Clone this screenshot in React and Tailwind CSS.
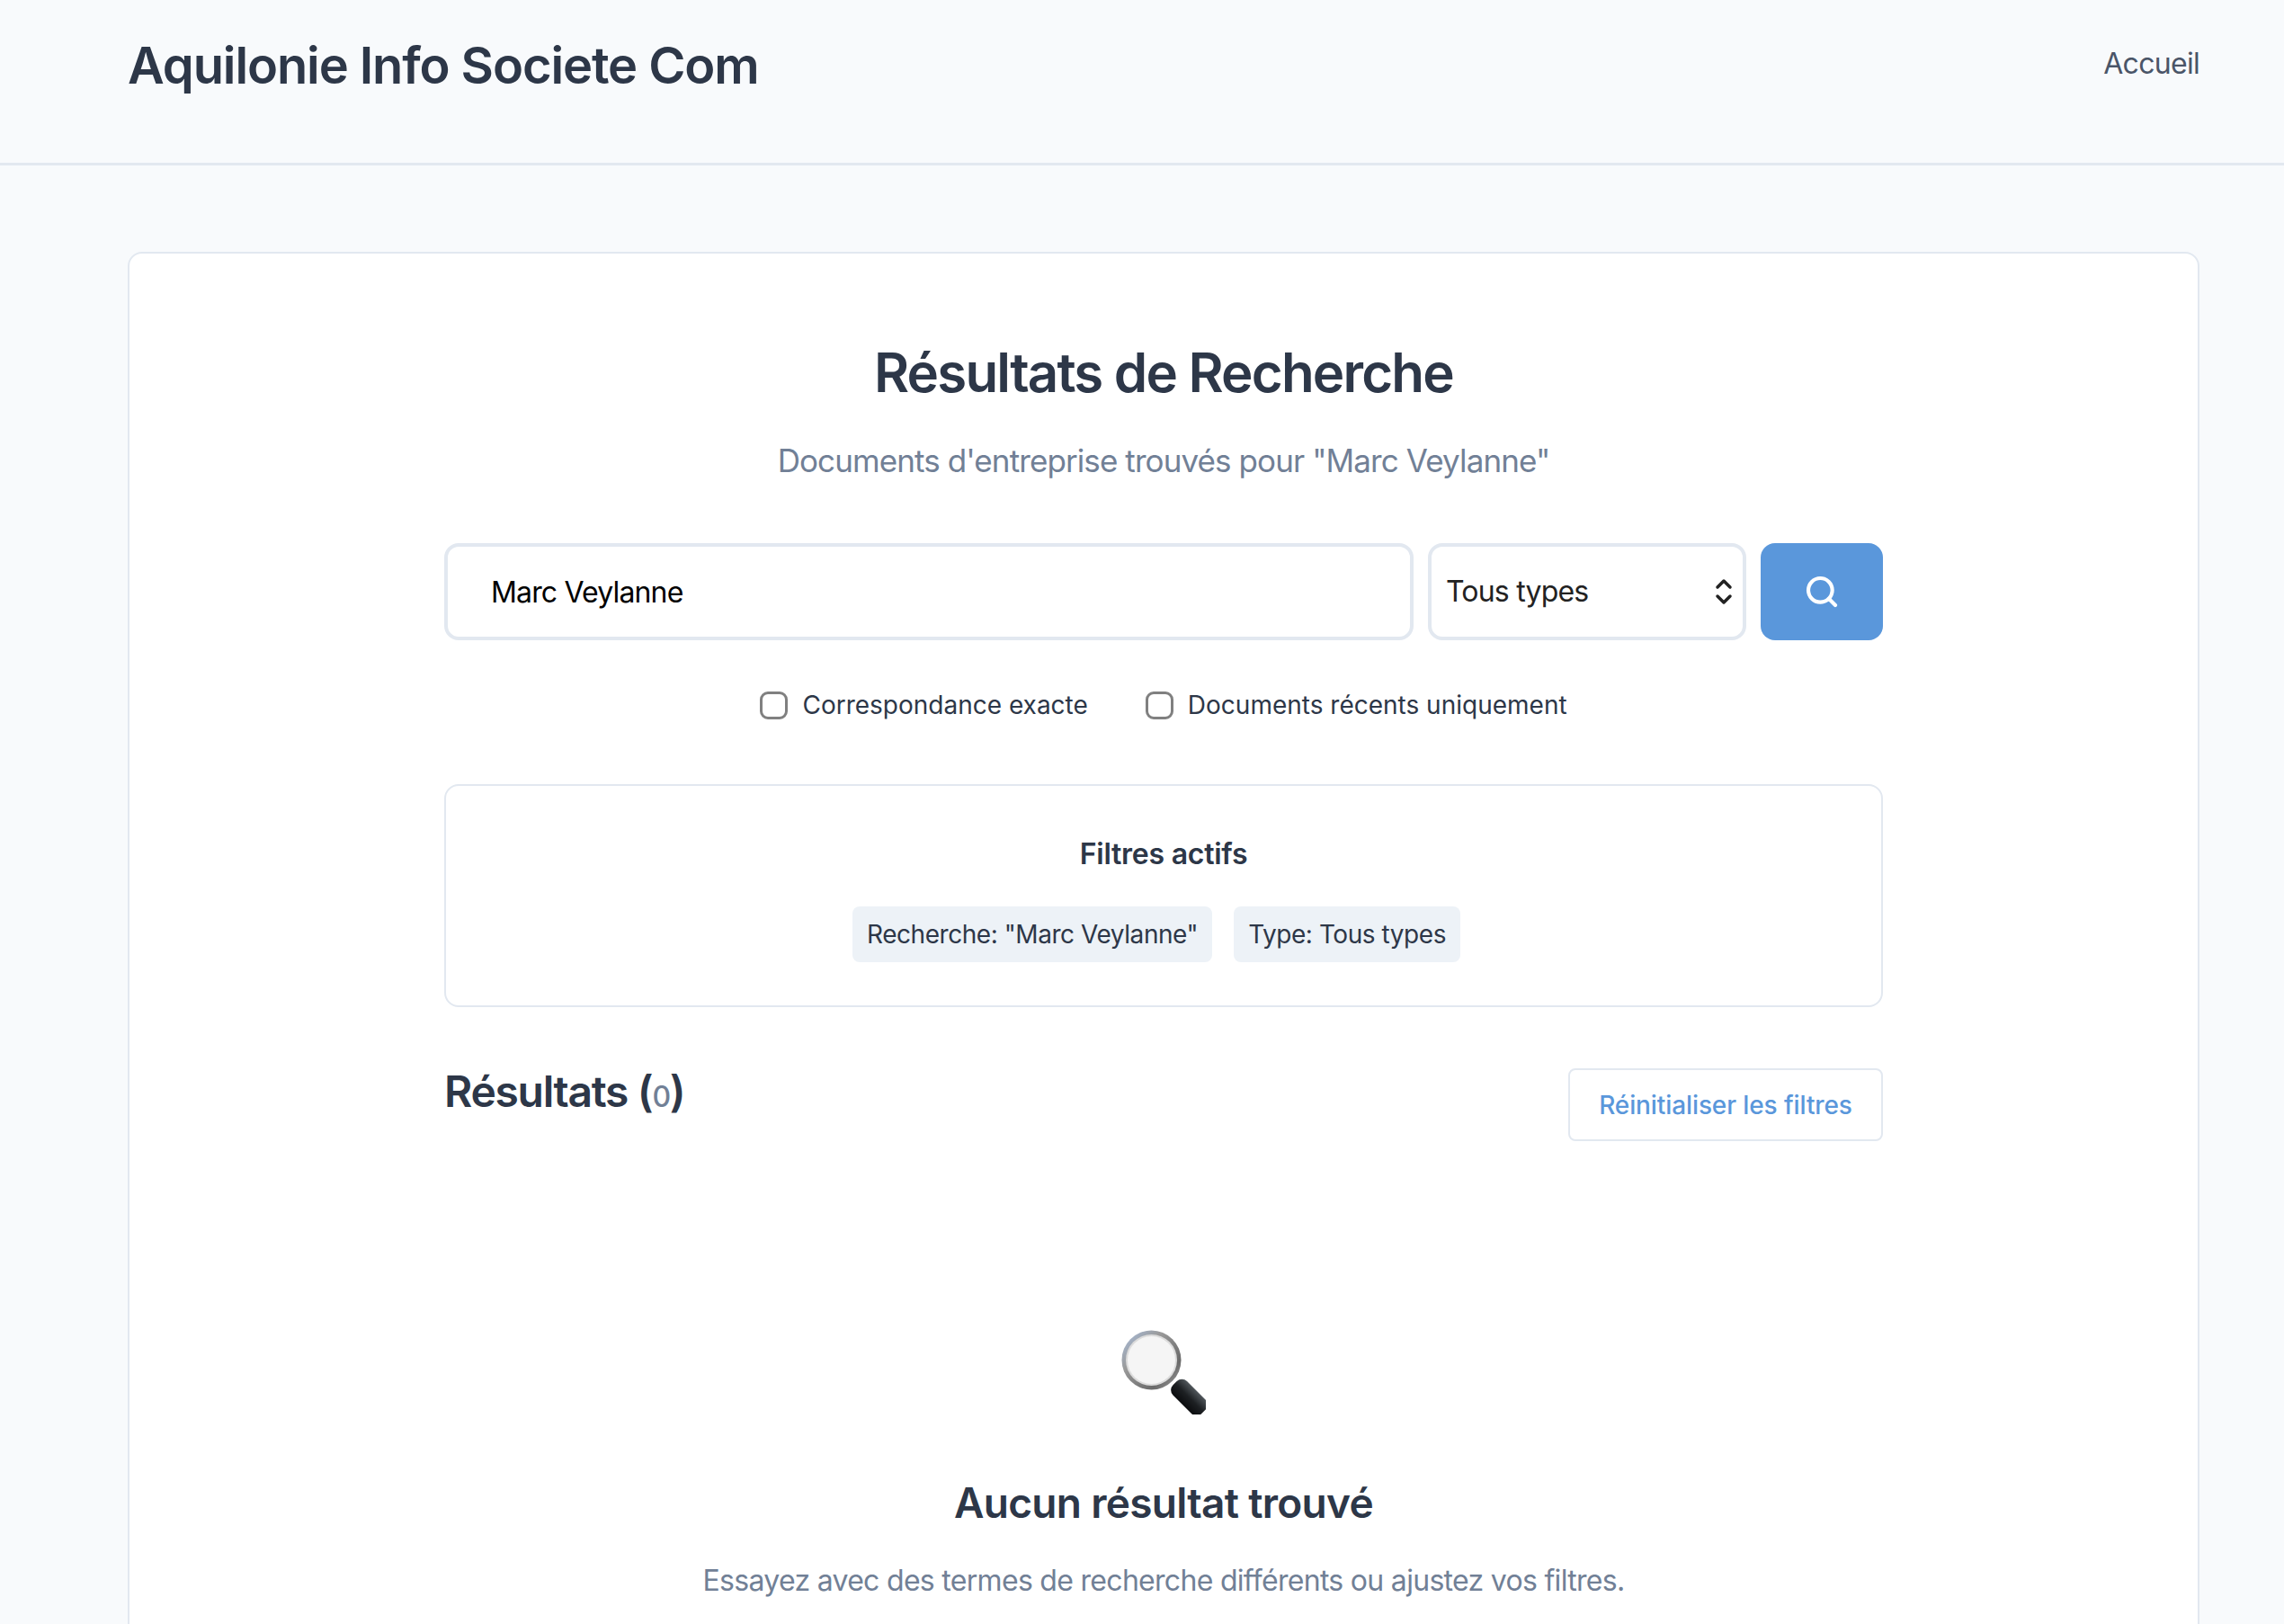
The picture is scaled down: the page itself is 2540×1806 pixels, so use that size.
import { Search } from 'lucide-react';

function Chip({ children }) {
  return (
    <span className="flex h-[62px] items-center rounded-lg bg-[#edf2f7] px-4 text-[28px] tracking-[-0.45px] text-[#2d3748]">
      {children}
    </span>
  );
}

function CheckOption({ label }) {
  return (
    <label className="flex items-center gap-4 text-[28px] text-[#2d3748]">
      <input type="checkbox" className="h-[31px] w-[31px] appearance-none rounded-[9px] border-[3px] border-[#808080] bg-white" />
      {label}
    </label>
  );
}

// emoji drawn by hand, no colour emoji font in the sandbox
function LensEmoji() {
  return (
    <svg className="h-[94px] w-[94px]" viewBox="0 0 94 94">
      <defs>
        <linearGradient id="ring" x1="0" y1="0" x2="1" y2="1">
          <stop offset="0" stopColor="#a9bfe0" />
          <stop offset="0.35" stopColor="#9a9a9a" />
          <stop offset="0.75" stopColor="#6a6a6a" />
          <stop offset="1" stopColor="#a8a8a8" />
        </linearGradient>
        <linearGradient id="handle" x1="0" y1="0" x2="0" y2="1">
          <stop offset="0" stopColor="#50565b" />
          <stop offset="0.5" stopColor="#1d2023" />
          <stop offset="1" stopColor="#0b0c0e" />
        </linearGradient>
      </defs>
      <rect x="53" y="64" width="45" height="22" rx="8" transform="rotate(45 75.5 75)" fill="url(#handle)" />
      <circle cx="33.5" cy="33.5" r="33" fill="url(#ring)" />
      <circle cx="33.5" cy="33.5" r="28.5" fill="#dcdcdc" />
      <circle cx="33.5" cy="33.5" r="26.5" fill="#f5f5f5" />
    </svg>
  );
}

export default function App() {
  return (
    <div className="h-screen overflow-hidden bg-[#f8fafc] font-['Inter',sans-serif]">
      <header className="flex h-[184px] items-start justify-between border-b-[3px] border-[#e2e8f0] pt-[32px] pr-[94px] pl-[142px]">
        <h1 className="text-[56px] leading-[82px] font-semibold tracking-[-1.1px] text-[#2d3748]">Aquilonie Info Societe Com</h1>
        <a className="text-[32px] leading-[78px] tracking-[-0.7px] text-[#4a5568]">Accueil</a>
      </header>

      <main className="pt-[96px] pr-[94px] pl-[142px]">
        <div className="rounded-2xl border-2 border-[#e2e8f0] bg-white pt-[96px] pb-[96px]">
          <div className="mx-auto w-[1600px]">
            <h2 className="text-center text-[60px] leading-[72px] font-semibold tracking-[-1.8px] text-[#2d3748]">Résultats de Recherche</h2>
            <p className="mt-[38px] text-center text-[35px] leading-[48px] tracking-[-0.9px] text-[#718096]">Documents d'entreprise trouvés pour "Marc Veylanne"</p>

            <form className="mt-[68px] flex gap-4">
              <input
                type="text"
                defaultValue="Marc Veylanne"
                className="h-[108px] w-[1078px] rounded-2xl border-4 border-[#e2e8f0] bg-white px-12 text-[32px] tracking-[-0.85px] text-black"
              />
              <div className="relative w-[354px]">
                <select className="h-[108px] w-full appearance-none rounded-2xl border-4 border-[#e2e8f0] bg-white pl-4 text-[32px] tracking-[-0.8px] text-[#222222]">
                  <option>Tous types</option>
                </select>
                <svg className="absolute top-[38px] right-[15px] h-[32px] w-[20px]" viewBox="0 0 20 32" fill="none" stroke="#222222" strokeWidth="3.5" strokeLinecap="round" strokeLinejoin="round">
                  <path d="M3 11l7-7 7 7M3 21l7 7 7-7" />
                </svg>
              </div>
              <button type="button" className="flex h-[108px] w-[136px] items-center justify-center rounded-2xl bg-[#5a97db] text-white">
                <Search size={40} strokeWidth={2.5} />
              </button>
            </form>

            <div className="mt-[51px] flex justify-center gap-16">
              <CheckOption label="Correspondance exacte" />
              <CheckOption label="Documents récents uniquement" />
            </div>

            <section className="mt-[67px] h-[248px] rounded-2xl border-2 border-[#e2e8f0] pt-[56px]">
              <h3 className="text-center text-[32px] leading-[40px] font-semibold tracking-[-0.25px] text-[#2d3748]">Filtres actifs</h3>
              <div className="mt-[38px] flex justify-center gap-6 pr-4">
                <Chip>Recherche: "Marc Veylanne"</Chip>
                <Chip>Type: Tous types</Chip>
              </div>
            </section>

            <div className="mt-[68px] flex items-start justify-between">
              <h3 className="text-[48px] leading-[52px] font-semibold tracking-[-1.3px] text-[#2d3748]">
                Résultats (<span className="text-[32px] font-medium text-[#718096]">0</span>)
              </h3>
              <button type="button" className="h-[81px] w-[350px] rounded-lg border-2 border-[#e2e8f0] bg-white text-[28px] font-medium tracking-[-0.1px] text-[#5a97db]">
                Réinitialiser les filtres
              </button>
            </div>

            <div className="mt-[210px] flex flex-col items-center">
              <LensEmoji />
              <h3 className="mt-[70px] text-[46px] leading-[56px] font-semibold tracking-[-0.7px] text-[#2d3748]">Aucun résultat trouvé</h3>
              <p className="mt-[37px] text-[32px] leading-[44px] tracking-[-0.7px] text-[#718096]">Essayez avec des termes de recherche différents ou ajustez vos filtres.</p>
            </div>
          </div>
        </div>
      </main>
    </div>
  );
}
